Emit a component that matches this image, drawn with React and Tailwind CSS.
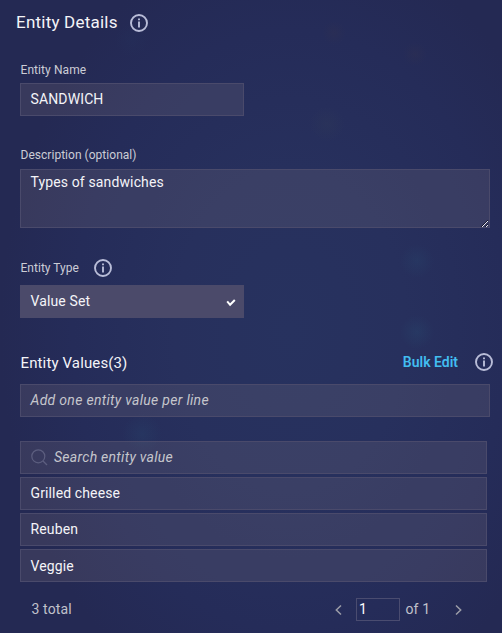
import React from "react";

function InfoIcon() {
  return (
    <svg className="h-[18px] w-[18px] shrink-0 text-[#b9bdd8]" viewBox="0 0 18 18" fill="none" stroke="currentColor">
      <circle cx="9" cy="9" r="8" strokeWidth="1.9" />
      <path d="M9 7.6V13.4" strokeWidth="1.9" />
      <path d="M9 4.4V6.2" strokeWidth="1.9" />
    </svg>
  );
}

const field = "border border-[#4a4a6b] bg-[#b9a79a22]";

function ValueRow({ children }) {
  return <li className={`${field} flex h-[33px] items-center pl-[9.5px] last:pt-[2px]`}>{children}</li>;
}

export default function App() {
  return (
    <main className="h-[633px] w-[502px] overflow-hidden bg-[#242a56] bg-[radial-gradient(circle_at_417px_261px,#284a7044_0px,transparent_17px),radial-gradient(circle_at_417px_332px,#284a7055_0px,transparent_17px),radial-gradient(circle_at_142px_434px,#284a7044_0px,transparent_20px),radial-gradient(circle_at_334px_33px,#30305066_0px,transparent_12px),radial-gradient(circle_at_415px_54px,#30305066_0px,transparent_12px),radial-gradient(circle_at_327px_124px,#2e385866_0px,transparent_18px),radial-gradient(circle_at_132px_40px,#25356033_0px,transparent_17px),radial-gradient(ellipse_290px_400px_at_290px_330px,#27325f_0%,#27305d_40%,#252c59_75%,#242953_100%)] font-['Roboto',sans-serif] text-[14px] tracking-[0.13px] text-[#f4f4f8]">
      <header className="flex h-[46px] items-center gap-[12px] pl-[16px]">
        <h1 className="pb-[2px] text-[17px] leading-[20px] tracking-[0.22px]">Entity Details</h1>
        <InfoIcon />
      </header>

      <section className="pl-[20px]">
        <label className="flex h-[37px] items-center pt-[11px] pl-[0.5px] text-[12px] tracking-[0.08px] text-[#cccdd6]">Entity Name</label>
        <div className={`${field} flex h-[33px] w-[224px] items-center pl-[9.5px] tracking-[0.13px]`}>SANDWICH</div>
      </section>

      <section className="pt-[26px] pl-[20px]">
        <label className="flex h-[27px] items-center pb-[2px] pl-[0.5px] text-[12px] tracking-[0.03px] text-[#cccdd6]">Description (optional)</label>
        <div className={`${field} flex h-[59px] w-[470px] justify-between pl-[9.5px]`}>
          <p className="pt-[2px] leading-[20px]">Types of sandwiches</p>
          <svg className="mr-[1px] h-[7px] w-[7px] self-end" viewBox="0 0 7 7" shapeRendering="crispEdges">
            <path d="M0 6h1v-1h1v-1h1v-1h1v-1h1v-1h1v-1h1M4 6h1v-1h1v-1h1" fill="none" stroke="#15162c" strokeWidth="1" />
            <path d="M1 6h1v1h-1zM2 5h1v1h-1zM3 4h1v1h-1zM4 3h1v1h-1zM5 2h1v1h-1zM6 1h1v1h-1zM5 6h1v1h-1zM6 5h1v1h-1z" fill="#e8e8f0" />
          </svg>
        </div>
      </section>

      <section className="pt-[26px] pl-[20px]">
        <div className="flex h-[31px] items-center gap-[15px] pb-[3px] pl-[0.5px]">
          <label className="text-[12px] tracking-[0.03px] text-[#cccdd6]">Entity Type</label>
          <InfoIcon />
        </div>
        <div className="flex h-[33px] w-[224px] items-center justify-between bg-[#4b4a6a] pr-[8px] pl-[10.5px]">
          <span>Value Set</span>
          <svg className="mt-[3px] h-[8px] w-[10px]" viewBox="0 0 10 8" fill="none" stroke="white" strokeWidth="2">
            <path d="M1.2 2.4L4.1 5.8L8.8 1" />
          </svg>
        </div>
      </section>

      <section className="pt-[26px] pl-[20px]">
        <div className="flex h-[40px] items-center pr-[9px] pb-[4px] pl-[0.5px]">
          <h2 className="pt-[2px] text-[15px]">Entity Values(3)</h2>
          <button className="mr-[17px] ml-auto pt-[1px] font-semibold tracking-[0px] text-[#42bdf0]">Bulk Edit</button>
          <InfoIcon />
        </div>
        <div className={`${field} flex h-[33px] w-[470px] items-center pl-[9.5px] tracking-[0.3px] text-[#c5c6cc] italic`}>Add one entity value per line</div>

        <div className={`${field} mt-[24px] flex h-[33px] w-[467px] items-center gap-[6px] pl-[10px] tracking-[0.28px] text-[#c5c6cc] italic`}>
          <svg className="h-[17px] w-[17px] text-[#5c5e7f]" viewBox="0 0 17 17" fill="none" stroke="currentColor" strokeWidth="1.2">
            <circle cx="7.3" cy="7.3" r="6.5" />
            <path d="M12 12L16 16" />
          </svg>
          <span>Search entity value</span>
        </div>
        <ul className="mt-[3px] flex w-[467px] flex-col gap-[3px]">
          <ValueRow>Grilled cheese</ValueRow>
          <ValueRow>Reuben</ValueRow>
          <ValueRow>Veggie</ValueRow>
        </ul>
      </section>

      <footer className="mt-[16px] flex h-[23px] items-center pl-[31px] text-[#c0c1cb]">
        <span className="w-[304px] pl-[0.5px]">3 total</span>
        <svg className="h-[12px] w-[7px] text-[#9c9da8]" viewBox="0 0 7 12" fill="none" stroke="currentColor" strokeWidth="1.5">
          <path d="M6 1.5L1.3 6L6 10.5" />
        </svg>
        <div className="ml-[14px] flex h-[23px] w-[44px] items-center border border-[#4a4c70] pl-[2px] text-white">1</div>
        <span className="ml-[5px] w-[50px] pl-[0.5px]">of 1</span>
        <svg className="h-[12px] w-[7px] text-[#9c9da8]" viewBox="0 0 7 12" fill="none" stroke="currentColor" strokeWidth="1.5">
          <path d="M1 1.5L5.7 6L1 10.5" />
        </svg>
      </footer>
    </main>
  );
}
